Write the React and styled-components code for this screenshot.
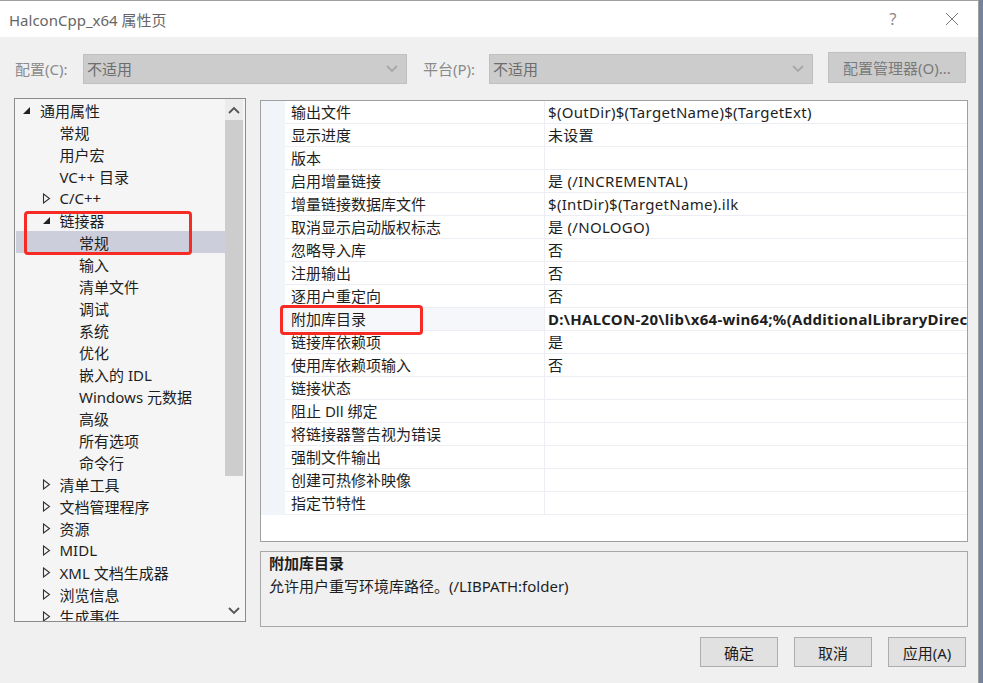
import React from 'react';
import styled, { createGlobalStyle } from 'styled-components';

const GlobalStyle = createGlobalStyle`
  html, body {
    margin: 0;
    padding: 0;
    background: #75849a;
  }
  body {
    font-family: 'Noto Sans', 'Noto Sans CJK SC', sans-serif;
    font-size: 15px;
    color: #1e1e1e;
  }
`;

const Window = styled.div`
  width: 979px;
  height: 683px;
  box-sizing: border-box;
  border-top: 1px solid #a0a0a0;
  border-right: 1px solid #a0a0a0;
  background: #f0f0f0;
  display: flex;
  flex-direction: column;
  overflow: hidden;
`;

const TitleBar = styled.div`
  height: 36px;
  background: #fff;
  display: flex;
  align-items: center;
  padding-left: 9px;
  flex-shrink: 0;
`;

const Title = styled.div`
  flex: 1;
  color: #666;
  font-size: 15px;
`;

const TitleButton = styled.div`
  width: ${(p) => p.$w}px;
  height: 36px;
  display: flex;
  align-items: center;
  justify-content: center;
  color: #888;
  font-size: 16px;
`;

const ConfigRow = styled.div`
  display: flex;
  align-items: center;
  padding: 16px 0 0 15px;
  height: 31px;
`;

const ConfigLabel = styled.span`
  color: #8a8a8a;
  width: ${(p) => p.$w}px;
`;

const Combo = styled.div`
  width: ${(p) => p.$w}px;
  height: 30px;
  box-sizing: border-box;
  background: #cccccc;
  border: 1px solid #c0c0c0;
  display: flex;
  align-items: center;
  padding: 0 8px 0 3px;
  color: #6d6d6d;
  margin-right: ${(p) => p.$mr}px;
  span {
    flex: 1;
  }
`;

const GrayButton = styled.div`
  width: 138px;
  height: 31px;
  box-sizing: border-box;
  background: #cccccc;
  border: 1px solid #c0c0c0;
  color: #7a7a7a;
  display: flex;
  align-items: center;
  justify-content: center;
  margin-top: -2px;
`;

const Main = styled.div`
  display: flex;
  padding: 14px 0 0 14px;
  gap: 14px;
`;

const TreeBox = styled.div`
  position: relative;
  width: 232px;
  height: 524px;
  box-sizing: border-box;
  border: 1px solid #8c8c8c;
  background: #f5f5f5;
  display: flex;
  overflow: hidden;
`;

const TreeList = styled.div`
  flex: 1;
  padding: 0 0 0 1px;
`;

const TreeRow = styled.div`
  height: 22px;
  display: flex;
  align-items: center;
  padding-left: ${(p) => 6 + p.$level * 19.5}px;
  background: ${(p) => (p.$selected ? '#cccedb' : 'transparent')};
  white-space: nowrap;
`;

const Expander = styled.span`
  width: 18px;
  display: flex;
  align-items: center;
  justify-content: flex-start;
`;

const Scrollbar = styled.div`
  width: 18px;
  margin-right: 2px;
  display: flex;
  flex-direction: column;
  background: #f5f5f5;
`;

const ScrollArrow = styled.div`
  height: 21px;
  display: flex;
  align-items: center;
  justify-content: center;
  background: ${(p) => (p.$top ? '#ececec' : '#f5f5f5')};
`;

const ScrollTrack = styled.div`
  flex: 1;
  display: flex;
  flex-direction: column;
`;

const ScrollThumb = styled.div`
  height: 356px;
  background: #cdcdcd;
`;

const RightCol = styled.div`
  display: flex;
  flex-direction: column;
  padding-top: 2px;
`;

const Grid = styled.div`
  position: relative;
  width: 708px;
  height: 442px;
  box-sizing: border-box;
  border: 1px solid #a0a0a0;
  background: #fff;
  display: flex;
  flex-direction: column;
`;

const GridRow = styled.div`
  display: grid;
  grid-template-columns: 24px 260px 1fr;
  height: 23px;
`;

const Margin = styled.div`
  background: #f1f4f9;
`;

const NameCell = styled.div`
  display: flex;
  align-items: center;
  padding: 0 0 1px 6px;
  border-bottom: 1px solid #edeef3;
  border-right: 1px solid #edeef3;
  background: ${(p) => (p.$hl ? '#f5f7fb' : '#fff')};
  white-space: nowrap;
`;

const ValueCell = styled.div`
  display: flex;
  align-items: center;
  padding: 0 0 1px 3px;
  border-bottom: 1px solid #edeef3;
  white-space: nowrap;
  overflow: hidden;
  letter-spacing: 0.3px;
  font-weight: ${(p) => (p.$bold ? 700 : 400)};
`;

const Annotation = styled.div`
  position: absolute;
  left: ${(p) => p.$x}px;
  top: ${(p) => p.$y}px;
  width: ${(p) => p.$w}px;
  height: ${(p) => p.$h}px;
  border: 3px solid #f62b24;
  border-radius: 4px;
  box-sizing: border-box;
  pointer-events: none;
`;

const Desc = styled.div`
  margin-top: 9px;
  width: 708px;
  height: 76px;
  box-sizing: border-box;
  border: 1px solid #a8a8a8;
  background: #f0f0f0;
  padding: 0 0 0 8px;
  line-height: 23px;
`;

const DescTitle = styled.div`
  font-weight: 700;
`;

const Footer = styled.div`
  display: flex;
  justify-content: flex-end;
  gap: 16px;
  padding: 10px 12px 0 0;
`;

const Button = styled.div`
  width: 78px;
  height: 30px;
  box-sizing: border-box;
  border: 1px solid #adadad;
  background: #e1e1e1;
  display: flex;
  align-items: center;
  justify-content: center;
`;

const Collapsed = () => (
  <svg width="9" height="11" viewBox="0 0 9 11">
    <path d="M1.5 1 L7.5 5.5 L1.5 10 Z" fill="none" stroke="#333" strokeWidth="1.1" />
  </svg>
);

const Expanded = () => (
  <svg width="9" height="9" viewBox="0 0 9 9">
    <path d="M8 1 L8 8 L1 8 Z" fill="#222" />
  </svg>
);

const Chevron = ({ up, color = '#555' }) => (
  <svg width="12" height="8" viewBox="0 0 12 8">
    <path d={up ? 'M1 7 L6 2 L11 7' : 'M1 1 L6 6 L11 1'} fill="none" stroke={color} strokeWidth="1.8" />
  </svg>
);

const treeItems = [
  { text: '通用属性', level: 0, exp: 'open' },
  { text: '常规', level: 1 },
  { text: '用户宏', level: 1 },
  { text: 'VC++ 目录', level: 1 },
  { text: 'C/C++', level: 1, exp: 'closed' },
  { text: '链接器', level: 1, exp: 'open' },
  { text: '常规', level: 2, selected: true },
  { text: '输入', level: 2 },
  { text: '清单文件', level: 2 },
  { text: '调试', level: 2 },
  { text: '系统', level: 2 },
  { text: '优化', level: 2 },
  { text: '嵌入的 IDL', level: 2 },
  { text: 'Windows 元数据', level: 2 },
  { text: '高级', level: 2 },
  { text: '所有选项', level: 2 },
  { text: '命令行', level: 2 },
  { text: '清单工具', level: 1, exp: 'closed' },
  { text: '文档管理程序', level: 1, exp: 'closed' },
  { text: '资源', level: 1, exp: 'closed' },
  { text: 'MIDL', level: 1, exp: 'closed' },
  { text: 'XML 文档生成器', level: 1, exp: 'closed' },
  { text: '浏览信息', level: 1, exp: 'closed' },
  { text: '生成事件', level: 1, exp: 'closed' },
];

const props = [
  ['输出文件', '$(OutDir)$(TargetName)$(TargetExt)'],
  ['显示进度', '未设置'],
  ['版本', ''],
  ['启用增量链接', '是 (/INCREMENTAL)'],
  ['增量链接数据库文件', '$(IntDir)$(TargetName).ilk'],
  ['取消显示启动版权标志', '是 (/NOLOGO)'],
  ['忽略导入库', '否'],
  ['注册输出', '否'],
  ['逐用户重定向', '否'],
  ['附加库目录', 'D:\\HALCON-20\\lib\\x64-win64;%(AdditionalLibraryDirectories)', true],
  ['链接库依赖项', '是'],
  ['使用库依赖项输入', '否'],
  ['链接状态', ''],
  ['阻止 Dll 绑定', ''],
  ['将链接器警告视为错误', ''],
  ['强制文件输出', ''],
  ['创建可热修补映像', ''],
  ['指定节特性', ''],
];

const PropertyPage = () => (
  <Window>
    <TitleBar>
      <Title>HalconCpp_x64 属性页</Title>
      <TitleButton $w={66}>?</TitleButton>
      <TitleButton $w={52}>
        <svg width="14" height="14" viewBox="0 0 14 14">
          <path d="M1 1 L13 13 M13 1 L1 13" stroke="#777" strokeWidth="1" />
        </svg>
      </TitleButton>
    </TitleBar>

    <ConfigRow>
      <ConfigLabel $w={68}>配置(C):</ConfigLabel>
      <Combo $w={324} $mr={16}>
        <span>不适用</span>
        <Chevron color="#a8a8a8" />
      </Combo>
      <ConfigLabel $w={66}>平台(P):</ConfigLabel>
      <Combo $w={324} $mr={15}>
        <span>不适用</span>
        <Chevron color="#a8a8a8" />
      </Combo>
      <GrayButton>配置管理器(O)...</GrayButton>
    </ConfigRow>

    <Main>
      <TreeBox>
        <TreeList>
          {treeItems.map((it, i) => (
            <TreeRow key={i} $level={it.level} $selected={it.selected}>
              <Expander>
                {it.exp === 'open' && <Expanded />}
                {it.exp === 'closed' && <Collapsed />}
              </Expander>
              {it.text}
            </TreeRow>
          ))}
        </TreeList>
        <Scrollbar>
          <ScrollArrow $top>
            <Chevron up />
          </ScrollArrow>
          <ScrollTrack>
            <ScrollThumb />
          </ScrollTrack>
          <ScrollArrow>
            <Chevron />
          </ScrollArrow>
        </Scrollbar>
        <Annotation $x={9} $y={112} $w={168} $h={44} />
      </TreeBox>

      <RightCol>
        <Grid>
          {props.map(([name, value, hl], i) => (
            <GridRow key={i}>
              <Margin />
              <NameCell $hl={hl}>{name}</NameCell>
              <ValueCell $bold={hl}>{value}</ValueCell>
            </GridRow>
          ))}
          <Annotation $x={19} $y={204} $w={143} $h={30} />
        </Grid>
        <Desc>
          <DescTitle>附加库目录</DescTitle>
          <div>允许用户重写环境库路径。(/LIBPATH:folder)</div>
        </Desc>
      </RightCol>
    </Main>

    <Footer>
      <Button>确定</Button>
      <Button>取消</Button>
      <Button>应用(A)</Button>
    </Footer>
  </Window>
);

export default function App() {
  return (
    <>
      <GlobalStyle />
      <PropertyPage />
    </>
  );
}
